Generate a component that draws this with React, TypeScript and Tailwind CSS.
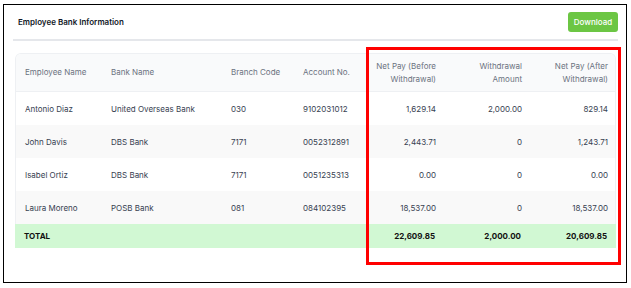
const rows = [
  { name: "Antonio Diaz", bank: "United Overseas Bank", branch: "030", account: "9102031012", before: "1,629.14", withdrawal: "2,000.00", after: "829.14" },
  { name: "John Davis", bank: "DBS Bank", branch: "7171", account: "0052312891", before: "2,443.71", withdrawal: "0", after: "1,243.71" },
  { name: "Isabel Ortiz", bank: "DBS Bank", branch: "7171", account: "0051235313", before: "0.00", withdrawal: "0", after: "0.00" },
  { name: "Laura Moreno", bank: "POSB Bank", branch: "081", account: "084102395", before: "18,537.00", withdrawal: "0", after: "18,537.00" },
];

const cols = "grid grid-cols-[86px_120px_72px_70px_80px_86px_86px]";

export default function App() {
  return (
    <div className="relative w-[631px] h-[288px] bg-white font-['Inter',sans-serif] overflow-hidden">
      <div className="ml-[3px] mt-[4px] w-[624px] h-[279px] border border-black bg-white">
        <div className="pl-[9px] pr-[8px]">
          <div className="flex items-center justify-between h-[34px] pl-[5px]">
            <h2 className="text-[8px] font-semibold text-[#111827]">Employee Bank Information</h2>
            <button className="h-[20px] w-[50px] rounded-[3px] bg-[#6cc644] text-white text-[8px] font-medium">
              Download
            </button>
          </div>
          <div className="h-[2px] bg-[#e5e7eb]" />

          <div className="mt-[12px] mx-[2px]">
            <div className="rounded-t-md border border-b-0 border-[#eef0f3] overflow-hidden">
              <div className={`${cols} h-[38px] items-center bg-[#f9fafb] text-[8px] text-[#6b7280] leading-[13px] border-b border-[#eef0f3]`}>
                <div className="pl-[9px]">Employee Name</div>
                <div className="pl-[9px]">Bank Name</div>
                <div className="pl-[9px]">Branch Code</div>
                <div className="pl-[9px]">Account No.</div>
                <div className="text-right pr-[8px]">Net Pay (Before<br />Withdrawal)</div>
                <div className="text-right pr-[8px]">Withdrawal<br />Amount</div>
                <div className="text-right pr-[8px]">Net Pay (After<br />Withdrawal)</div>
              </div>
              {rows.map((r, i) => (
                <div
                  key={r.name}
                  className={`${cols} h-[33px] items-center text-[8px] text-[#374151] ${i % 2 === 1 ? "bg-[#f9f9f9]" : "bg-white"}`}
                >
                  <div className="pl-[9px]">{r.name}</div>
                  <div className="pl-[9px]">{r.bank}</div>
                  <div className="pl-[9px]">{r.branch}</div>
                  <div className="pl-[9px]">{r.account}</div>
                  <div className="text-right pr-[8px]">{r.before}</div>
                  <div className="text-right pr-[8px]">{r.withdrawal}</div>
                  <div className="text-right pr-[8px]">{r.after}</div>
                </div>
              ))}
            </div>
            <div className={`${cols} h-[24px] items-center bg-[#d1f8d3] text-[8px] font-bold text-[#111]`}>
              <div className="pl-[9px] col-span-4">TOTAL</div>
              <div className="text-right pr-[8px]">22,609.85</div>
              <div className="text-right pr-[8px]">2,000.00</div>
              <div className="text-right pr-[8px]">20,609.85</div>
            </div>
          </div>
        </div>
      </div>
      <div className="absolute left-[366px] top-[47px] w-[255px] h-[218px] border-[3px] border-[#ff0000]" />
    </div>
  );
}
